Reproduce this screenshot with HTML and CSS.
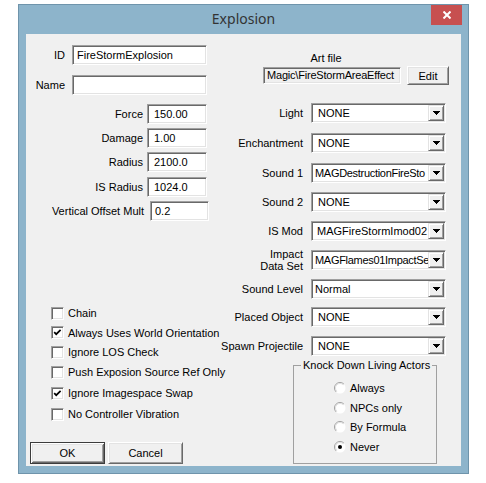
FILE: index.html
```html
<!DOCTYPE html>
<html>
<head>
<meta charset="utf-8">
<link rel="stylesheet" href="styles.css">
</head>
<body>
<div class="window">
  <div class="titlebar">
    <div class="title">Explosion</div>
    <div class="close"><svg width="8" height="8" viewBox="0 0 8 8"><path d="M0.5 0.5L7.5 7.5M7.5 0.5L0.5 7.5" stroke="#fff" stroke-width="2"/></svg></div>
  </div>
  <div class="client">
    <div class="left">
      <div class="row id-row"><label>ID</label><div class="edit w135">FireStormExplosion</div></div>
      <div class="row name-row"><label>Name</label><div class="edit w135"></div></div>
      <div class="nums">
        <div class="row num"><label>Force</label><div class="edit">150.00</div></div>
        <div class="row num"><label>Damage</label><div class="edit">1.00</div></div>
        <div class="row num"><label>Radius</label><div class="edit">2100.0</div></div>
        <div class="row num"><label>IS Radius</label><div class="edit">1024.0</div></div>
        <div class="row vom"><label>Vertical Offset Mult</label><div class="edit">0.2</div></div>
      </div>
      <div class="checks">
        <div class="check"><span class="box"></span><span>Chain</span></div>
        <div class="check"><span class="box"><svg width="9" height="9" viewBox="0 0 9 9"><polyline points="1.2,4.2 3.2,6.2 7.6,1.8" fill="none" stroke="#000" stroke-width="1.7"/></svg></span><span>Always Uses World Orientation</span></div>
        <div class="check"><span class="box"></span><span>Ignore LOS Check</span></div>
        <div class="check"><span class="box"></span><span>Push Exposion Source Ref Only</span></div>
        <div class="check"><span class="box"><svg width="9" height="9" viewBox="0 0 9 9"><polyline points="1.2,4.2 3.2,6.2 7.6,1.8" fill="none" stroke="#000" stroke-width="1.7"/></svg></span><span>Ignore Imagespace Swap</span></div>
        <div class="check"><span class="box"></span><span>No Controller Vibration</span></div>
      </div>
      <div class="buttons">
        <button class="btn default">OK</button>
        <button class="btn">Cancel</button>
      </div>
    </div>
    <div class="right">
      <div class="art-label">Art file</div>
      <div class="art-row">
        <div class="edit art">Magic\FireStormAreaEffect</div>
        <button class="btn edit-btn">Edit</button>
      </div>
      <div class="combos">
        <div class="crow"><label>Light</label><div class="combo"><span class="val sel">NONE</span><span class="drop"><svg width="7" height="4" viewBox="0 0 7 4"><path d="M0 0h7v1h-1v1h-1v1h-1v1h-1v-1h-1v-1h-1v-1h-1z" fill="#000"/></svg></span></div></div>
        <div class="crow"><label>Enchantment</label><div class="combo"><span class="val sel">NONE</span><span class="drop"><svg width="7" height="4" viewBox="0 0 7 4"><path d="M0 0h7v1h-1v1h-1v1h-1v1h-1v-1h-1v-1h-1v-1h-1z" fill="#000"/></svg></span></div></div>
        <div class="crow"><label>Sound 1</label><div class="combo"><span class="val tight">MAGDestructionFireSto</span><span class="drop"><svg width="7" height="4" viewBox="0 0 7 4"><path d="M0 0h7v1h-1v1h-1v1h-1v1h-1v-1h-1v-1h-1v-1h-1z" fill="#000"/></svg></span></div></div>
        <div class="crow"><label>Sound 2</label><div class="combo"><span class="val sel">NONE</span><span class="drop"><svg width="7" height="4" viewBox="0 0 7 4"><path d="M0 0h7v1h-1v1h-1v1h-1v1h-1v-1h-1v-1h-1v-1h-1z" fill="#000"/></svg></span></div></div>
        <div class="crow"><label>IS Mod</label><div class="combo"><span class="val mid">MAGFireStormImod02</span><span class="drop"><svg width="7" height="4" viewBox="0 0 7 4"><path d="M0 0h7v1h-1v1h-1v1h-1v1h-1v-1h-1v-1h-1v-1h-1z" fill="#000"/></svg></span></div></div>
        <div class="crow"><label class="two">Impact<br>Data Set</label><div class="combo"><span class="val tight">MAGFlames01ImpactSe</span><span class="drop"><svg width="7" height="4" viewBox="0 0 7 4"><path d="M0 0h7v1h-1v1h-1v1h-1v1h-1v-1h-1v-1h-1v-1h-1z" fill="#000"/></svg></span></div></div>
        <div class="crow"><label>Sound Level</label><div class="combo"><span class="val">Normal</span><span class="drop"><svg width="7" height="4" viewBox="0 0 7 4"><path d="M0 0h7v1h-1v1h-1v1h-1v1h-1v-1h-1v-1h-1v-1h-1z" fill="#000"/></svg></span></div></div>
        <div class="crow"><label>Placed Object</label><div class="combo"><span class="val sel">NONE</span><span class="drop"><svg width="7" height="4" viewBox="0 0 7 4"><path d="M0 0h7v1h-1v1h-1v1h-1v1h-1v-1h-1v-1h-1v-1h-1z" fill="#000"/></svg></span></div></div>
        <div class="crow"><label>Spawn Projectile</label><div class="combo"><span class="val sel">NONE</span><span class="drop"><svg width="7" height="4" viewBox="0 0 7 4"><path d="M0 0h7v1h-1v1h-1v1h-1v1h-1v-1h-1v-1h-1v-1h-1z" fill="#000"/></svg></span></div></div>
      </div>
      <fieldset class="group">
        <legend>Knock Down Living Actors</legend>
        <div class="radios">
          <div class="radio"><svg width="12" height="12" viewBox="0 0 12 12"><circle cx="6" cy="6" r="5.5" fill="#fff"/><path d="M2.1 9.9A5.5 5.5 0 0 1 9.9 2.1" fill="none" stroke="#a0a0a0"/><path d="M2.8 9.2A4.5 4.5 0 0 1 9.2 2.8" fill="none" stroke="#e0e0e0"/></svg><span>Always</span></div>
          <div class="radio"><svg width="12" height="12" viewBox="0 0 12 12"><circle cx="6" cy="6" r="5.5" fill="#fff"/><path d="M2.1 9.9A5.5 5.5 0 0 1 9.9 2.1" fill="none" stroke="#a0a0a0"/><path d="M2.8 9.2A4.5 4.5 0 0 1 9.2 2.8" fill="none" stroke="#e0e0e0"/></svg><span>NPCs only</span></div>
          <div class="radio"><svg width="12" height="12" viewBox="0 0 12 12"><circle cx="6" cy="6" r="5.5" fill="#fff"/><path d="M2.1 9.9A5.5 5.5 0 0 1 9.9 2.1" fill="none" stroke="#a0a0a0"/><path d="M2.8 9.2A4.5 4.5 0 0 1 9.2 2.8" fill="none" stroke="#e0e0e0"/></svg><span>By Formula</span></div>
          <div class="radio"><svg width="12" height="12" viewBox="0 0 12 12"><circle cx="6" cy="6" r="5.5" fill="#fff"/><path d="M2.1 9.9A5.5 5.5 0 0 1 9.9 2.1" fill="none" stroke="#a0a0a0"/><path d="M2.8 9.2A4.5 4.5 0 0 1 9.2 2.8" fill="none" stroke="#e0e0e0"/><circle cx="6" cy="6" r="2" fill="#000"/></svg><span>Never</span></div>
        </div>
      </fieldset>
    </div>
  </div>
</div>
</body>
</html>
```

FILE: styles.css
```css
body {
  margin: 0;
  background: #fff;
  font-family: "Liberation Sans", Arial, sans-serif;
  font-size: 11px;
  color: #000;
}

.window {
  margin: 4px 0 0 18px;
  width: 451px;
  height: 470px;
  box-sizing: border-box;
  border: 1px solid #6f94ab;
  background: #8db4cb;
  display: flex;
  flex-direction: column;
}

.titlebar {
  height: 29px;
  display: grid;
  grid-template-columns: 1fr auto 1fr;
  align-items: start;
}

.title {
  grid-column: 2;
  font-family: "Noto Sans", sans-serif;
  font-size: 14px;
  line-height: 28px;
  color: #333;
}

.close {
  grid-column: 3;
  justify-self: end;
  margin-right: 6px;
  width: 31px;
  height: 20px;
  background: #c75050;
  display: flex;
  align-items: center;
  justify-content: center;
}

.client {
  margin: 0 7px;
  height: 432px;
  background: #f0f0f0;
  display: flex;
}

.left {
  width: 197px;
  display: flex;
  flex-direction: column;
}

.row {
  display: flex;
  align-items: center;
  width: 181px;
  height: 20px;
  gap: 7px;
}

.row label {
  flex: 1;
  text-align: right;
  white-space: nowrap;
}

.id-row { margin-top: 11px; }
.name-row { margin-top: 10px; }

.edit {
  box-sizing: border-box;
  height: 20px;
  background: #fff;
  border-style: solid;
  border-width: 1px;
  border-color: #a0a0a0 #fff #fff #a0a0a0;
  box-shadow: inset 1px 1px 0 #696969, inset -1px -1px 0 #e3e3e3;
  padding: 0 4px;
  line-height: 18px;
  white-space: nowrap;
  overflow: hidden;
}

.w135 { width: 135px; }

.nums {
  margin-top: 9px;
  display: grid;
  grid-template-rows: 24px 24px 25px 24px 20px;
}

.num { gap: 4px; }
.num .edit { width: 60px; padding-left: 6px; }
.vom { width: 183px; gap: 6px; }
.vom .edit { width: 59px; padding-left: 4px; }

.checks {
  margin-top: 82px;
  margin-left: 25px;
  display: grid;
  grid-template-rows: 20px 19px 20px 20px 22px 20px;
}

.check {
  display: flex;
  align-items: center;
  gap: 4px;
  white-space: nowrap;
}

.box {
  width: 13px;
  height: 13px;
  box-sizing: border-box;
  background: #fff;
  border-style: solid;
  border-width: 1px;
  border-color: #a0a0a0 #fff #fff #a0a0a0;
  box-shadow: inset 1px 1px 0 #696969, inset -1px -1px 0 #e3e3e3;
  padding: 1px;
  display: flex;
}

.buttons {
  margin-top: 18px;
  margin-left: 4px;
  display: flex;
  gap: 3px;
}

.btn {
  width: 75px;
  height: 22px;
  box-sizing: border-box;
  background: #f0f0f0;
  font-family: inherit;
  font-size: 11px;
  color: #000;
  padding: 0;
  border: 1px solid;
  border-color: #fff #696969 #696969 #fff;
  box-shadow: inset 1px 1px 0 #e3e3e3, inset -1px -1px 0 #a0a0a0;
}

.btn.default {
  border-color: #3c3c3c;
  box-shadow: inset 1px 1px 0 #fff, inset -1px -1px 0 #696969, inset 2px 2px 0 #e3e3e3, inset -2px -2px 0 #a0a0a0;
}

.right {
  width: 226px;
  display: flex;
  flex-direction: column;
}

.art-label {
  margin-top: 18px;
  line-height: 13px;
  padding-left: 40px;
  width: 126px;
  text-align: center;
}

.art-row {
  margin-top: 1px;
  height: 19px;
  display: flex;
  align-items: center;
}

.art {
  margin-left: 40px;
  width: 138px;
  height: 17px;
  line-height: 15px;
  padding: 0 0 0 3px;
  letter-spacing: -0.2px;
  background: #f0f0f0;
}

.edit-btn {
  margin-left: 6px;
  width: 42px;
  height: 19px;
}

.combos {
  margin-top: 18px;
  display: grid;
  grid-template-rows: 30px 30px 29px 29px 29px 29px 28px 29px 20px;
}

.crow {
  width: 223px;
  height: 20px;
  display: flex;
  align-items: center;
  justify-content: flex-end;
  gap: 8px;
}

.crow label {
  text-align: right;
  white-space: nowrap;
  line-height: 12px;
  flex: none;
}

.combo {
  flex: none;
  width: 135px;
  height: 20px;
  box-sizing: border-box;
  background: #fff;
  border-style: solid;
  border-width: 1px;
  border-color: #a0a0a0 #fff #fff #a0a0a0;
  box-shadow: inset 1px 1px 0 #696969, inset -1px -1px 0 #e3e3e3;
  padding: 1px;
  display: flex;
}

.val {
  flex: 1;
  min-width: 0;
  padding-left: 2px;
  line-height: 16px;
  white-space: nowrap;
  overflow: hidden;
}

.val.sel { padding-left: 5px; }
.val.mid { padding-left: 4px; }
.val.tight { padding-left: 2px; letter-spacing: -0.3px; }

.drop {
  width: 16px;
  flex: none;
  box-sizing: border-box;
  background: #f0f0f0;
  border-style: solid;
  border-width: 1px;
  border-color: #e3e3e3 #696969 #696969 #e3e3e3;
  box-shadow: inset 1px 1px 0 #fff, inset -1px -1px 0 #a0a0a0;
  display: flex;
  align-items: center;
  justify-content: center;
}

.group {
  margin: 3px 0 0 70px;
  width: 144px;
  height: 105px;
  min-width: 0;
  box-sizing: border-box;
  border: 1px solid #a0a0a0;
  padding: 0;
}

.group legend {
  margin-left: 7px;
  padding: 0 2px;
  line-height: 13px;
}

.radios {
  margin: 6px 0 0 40px;
  display: grid;
  grid-template-rows: 20px 19px 20px 20px;
}

.radio {
  display: flex;
  align-items: center;
  gap: 4px;
  white-space: nowrap;
}
```
